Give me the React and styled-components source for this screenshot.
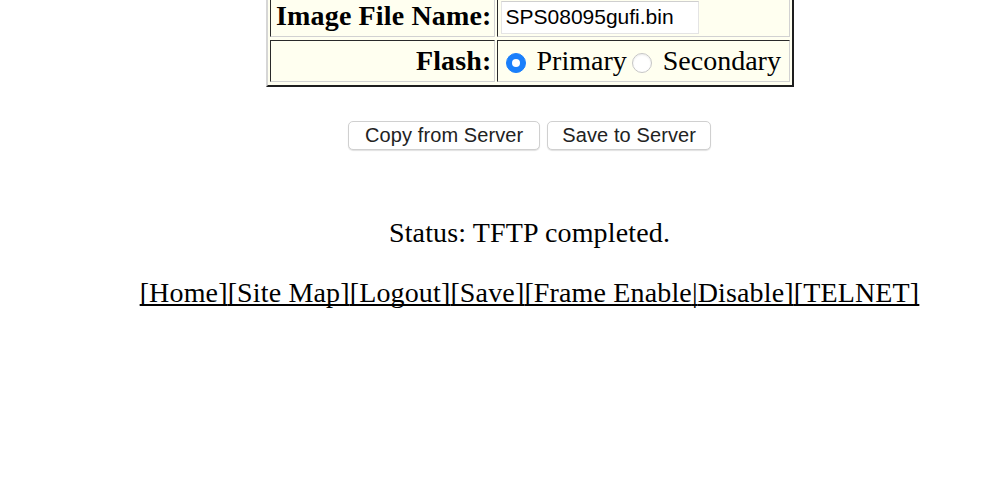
import React from 'react'
import styled, { createGlobalStyle } from 'styled-components';

const GlobalStyle = createGlobalStyle`
    body{
        margin:0;
        background:#ffffff;
    }
`;

const Page = styled.div`
    margin:-10px 0 0 60px;
    text-align:center;
    font-family:"Liberation Serif", "Times New Roman", serif;
    font-size:28px;
    letter-spacing:0.15px;
    color:#000;
`;

const FormTable = styled.table`
    margin:0 auto;
    border:2px solid;
    border-color:#d6d6d6 #1e1e1e #1e1e1e #d6d6d6;
    border-spacing:2px 3px;
    background:#fffff0;
`;

const Cell = styled.td`
    border:1px solid;
    border-color:#2a2a2a #d2d2d2 #d2d2d2 #2a2a2a;
    padding:1px 3px;
    height:38px;
    width:${p => p.$w}px;
    text-align:left;
    vertical-align:middle;
    white-space:nowrap;
    line-height:32px;
    letter-spacing:0;
`;

const Label = styled(Cell).attrs({ as: 'th' })`
    font-weight:bold;
    text-align:right;
    padding:1px 2px;
    letter-spacing:0.15px;
`;

const TextInput = styled.input`
    box-sizing:border-box;
    width:198px;
    height:33px;
    padding:0 4px;
    border:1px solid #e4e4e4;
    border-top-color:#cfcfcf;
    background:#fff;
    font-family:"Liberation Sans", Arial, sans-serif;
    font-size:21px;
    letter-spacing:0;
    color:#000;
    vertical-align:middle;
    outline:none;
`;

const Radio = styled.span`
    display:inline-block;
    box-sizing:border-box;
    width:20px;
    height:20px;
    margin:0 4px 0 5px;
    border-radius:50%;
    vertical-align:-3px;
    position:relative;
    background:${p => p.$checked ? '#1a7ffb' : '#ffffff'};
    border:1px solid ${p => p.$checked ? '#1a7ffb' : '#c6c6c6'};
    box-shadow:${p => p.$checked ? 'none' : 'inset 0 1px 2px rgba(0,0,0,0.08)'};

    &::after{
        content:'';
        display:${p => p.$checked ? 'block' : 'none'};
        position:absolute;
        left:50%;
        top:50%;
        width:8px;
        height:8px;
        margin:-4px 0 0 -4px;
        border-radius:50%;
        background:#fff;
    }
`;

const ButtonRow = styled.div`
    display:flex;
    justify-content:center;
    gap:7px;
    margin-top:34px;
`;

const Button = styled.button`
    height:29px;
    padding:0 ${p => p.$pad || 16}px;
    background:#fff;
    border:1px solid #d0d0d0;
    border-radius:5px;
    box-shadow:0 1px 1px rgba(0,0,0,0.12);
    font-family:"Liberation Sans", Arial, sans-serif;
    font-size:20px;
    letter-spacing:0.1px;
    color:#222;
    line-height:27px;
`;

const Status = styled.p`
    margin:67px 0 0;
    line-height:32px;
`;

const Links = styled.p`
    margin:28px 0 0;
    line-height:32px;

    a{
        color:#000;
        text-decoration:underline;
        text-decoration-skip-ink:none;
        text-underline-offset:2px;
    }
`;

const links = ['[Home]', '[Site Map]', '[Logout]', '[Save]'];

export default function App() {
    return (
        <>
            <GlobalStyle />
            <Page>
                <FormTable>
                    <tbody>
                        <tr>
                            <Label $w={219}>Image File Name:</Label>
                            <Cell $w={285}>
                                <TextInput defaultValue="SPS08095gufi.bin" />
                            </Cell>
                        </tr>
                        <tr>
                            <Label $w={219}>Flash:</Label>
                            <Cell $w={285}>
                                <Radio $checked /> Primary<Radio /> Secondary
                            </Cell>
                        </tr>
                    </tbody>
                </FormTable>

                <ButtonRow>
                    <Button $pad={16}>Copy from Server</Button>
                    <Button $pad={14}>Save to Server</Button>
                </ButtonRow>

                <Status>Status: TFTP completed.</Status>

                <Links>
                    {links.map(l => <a href="#" key={l}>{l}</a>)}
                    <a href="#">[Frame Enable</a><a href="#">|</a><a href="#">Disable]</a>
                    <a href="#">[TELNET]</a>
                </Links>
            </Page>
        </>
    )
}
